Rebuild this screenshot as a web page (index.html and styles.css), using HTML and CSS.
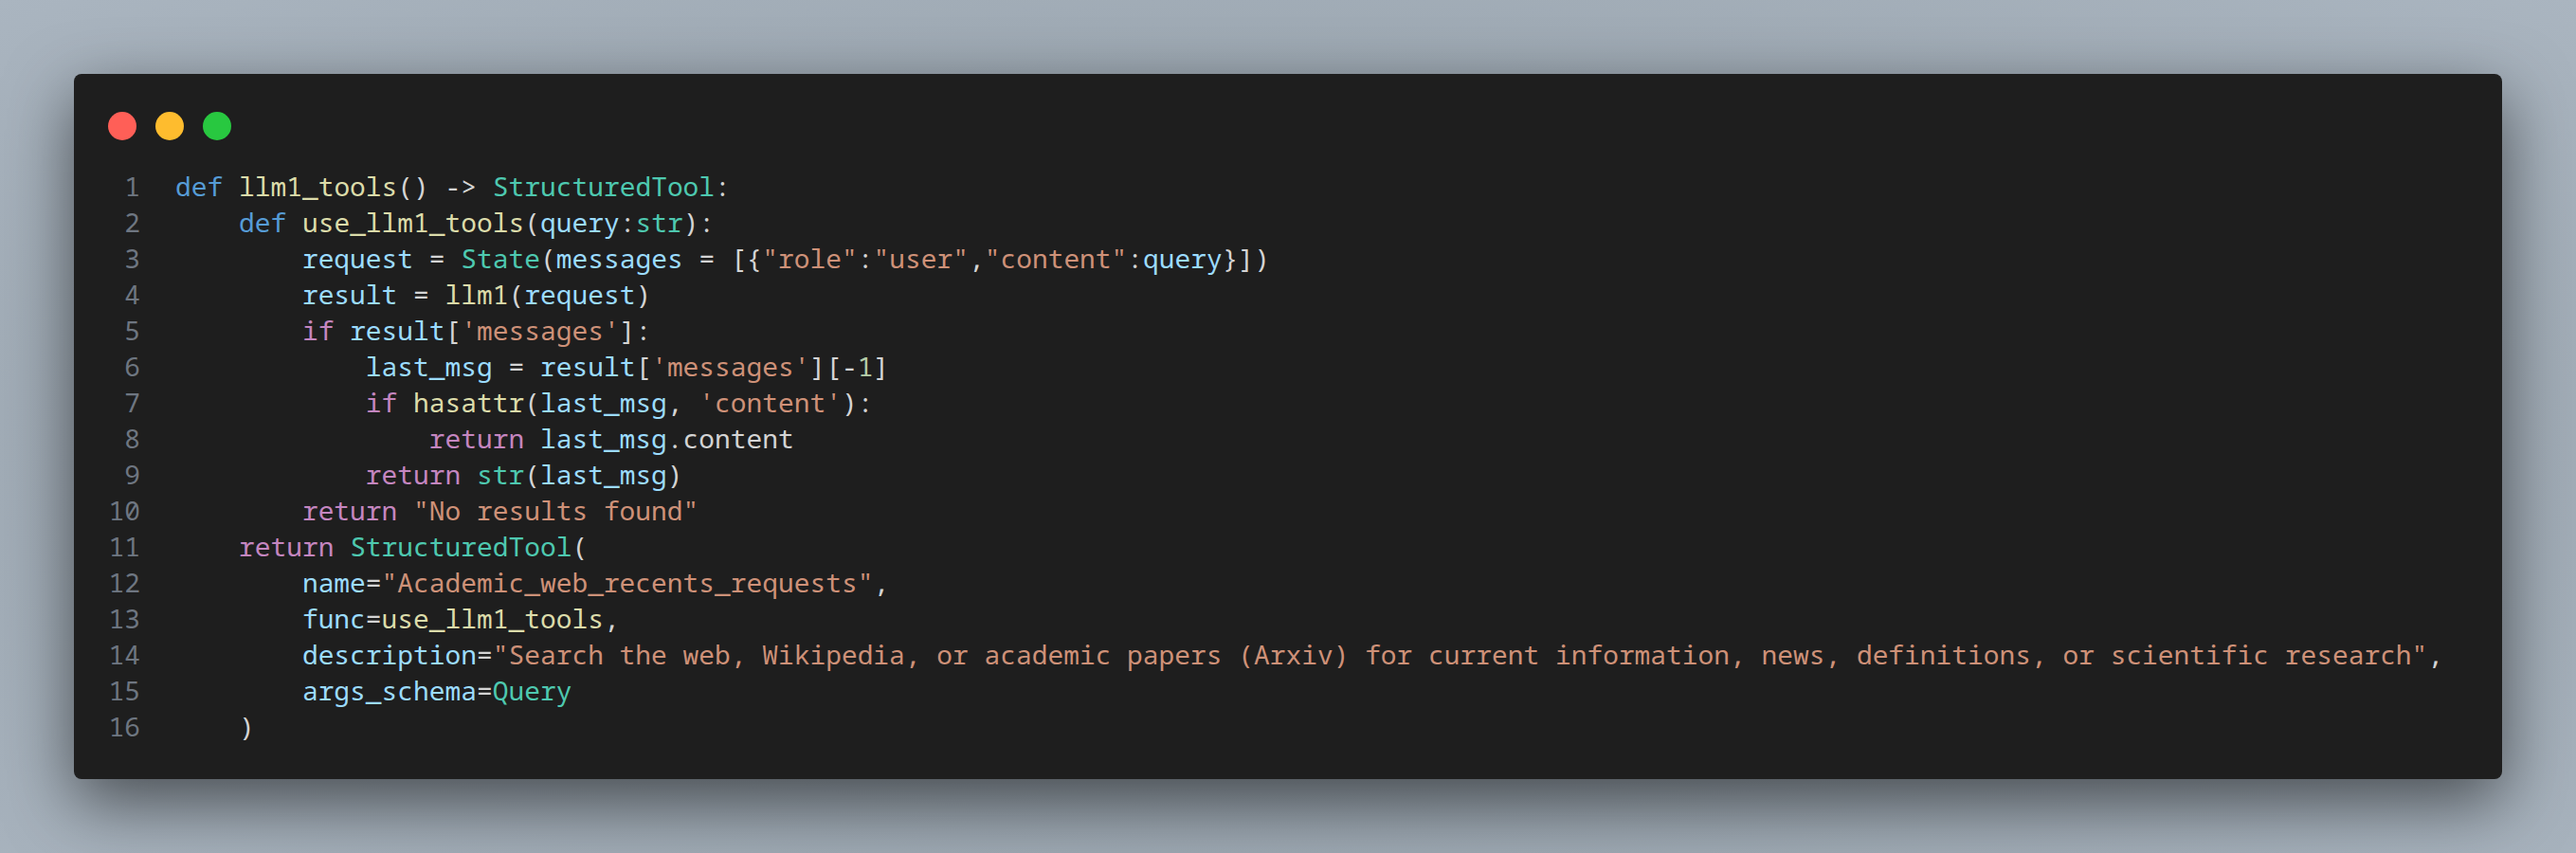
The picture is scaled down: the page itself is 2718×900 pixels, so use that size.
FILE: index.html
```html
<!DOCTYPE html>
<html lang="en">
<head>
<meta charset="utf-8">
<title>Code window</title>
<link rel="stylesheet" href="styles.css">
</head>
<body>
<div class="window">
  <div class="titlebar">
    <span class="dot red"></span>
    <span class="dot yellow"></span>
    <span class="dot green"></span>
  </div>
  <div class="code">
    <div class="ln">1</div><div class="line"><span class="kw">def</span> <span class="fn">llm1_tools</span><span class="p">()</span> <span class="p">-&gt;</span> <span class="cls">StructuredTool</span><span class="p">:</span></div>
    <div class="ln">2</div><div class="line">    <span class="kw">def</span> <span class="fn">use_llm1_tools</span><span class="p">(</span><span class="var">query</span><span class="p">:</span><span class="cls">str</span><span class="p">):</span></div>
    <div class="ln">3</div><div class="line">        <span class="var">request</span> <span class="p">=</span> <span class="cls">State</span><span class="p">(</span><span class="var">messages</span> <span class="p">=</span> <span class="p">[{</span><span class="str">"role"</span><span class="p">:</span><span class="str">"user"</span><span class="p">,</span><span class="str">"content"</span><span class="p">:</span><span class="var">query</span><span class="p">}])</span></div>
    <div class="ln">4</div><div class="line">        <span class="var">result</span> <span class="p">=</span> <span class="fn">llm1</span><span class="p">(</span><span class="var">request</span><span class="p">)</span></div>
    <div class="ln">5</div><div class="line">        <span class="ctl">if</span> <span class="var">result</span><span class="p">[</span><span class="str">'messages'</span><span class="p">]:</span></div>
    <div class="ln">6</div><div class="line">            <span class="var">last_msg</span> <span class="p">=</span> <span class="var">result</span><span class="p">[</span><span class="str">'messages'</span><span class="p">][-</span><span class="num">1</span><span class="p">]</span></div>
    <div class="ln">7</div><div class="line">            <span class="ctl">if</span> <span class="fn">hasattr</span><span class="p">(</span><span class="var">last_msg</span><span class="p">,</span> <span class="str">'content'</span><span class="p">):</span></div>
    <div class="ln">8</div><div class="line">                <span class="ctl">return</span> <span class="var">last_msg</span><span class="p">.content</span></div>
    <div class="ln">9</div><div class="line">            <span class="ctl">return</span> <span class="cls">str</span><span class="p">(</span><span class="var">last_msg</span><span class="p">)</span></div>
    <div class="ln">10</div><div class="line">        <span class="ctl">return</span> <span class="str">"No results found"</span></div>
    <div class="ln">11</div><div class="line">    <span class="ctl">return</span> <span class="cls">StructuredTool</span><span class="p">(</span></div>
    <div class="ln">12</div><div class="line">        <span class="var">name</span><span class="p">=</span><span class="str">"Academic_web_recents_requests"</span><span class="p">,</span></div>
    <div class="ln">13</div><div class="line">        <span class="var">func</span><span class="p">=</span><span class="fn">use_llm1_tools</span><span class="p">,</span></div>
    <div class="ln">14</div><div class="line">        <span class="var">description</span><span class="p">=</span><span class="str">"Search the web, Wikipedia, or academic papers (Arxiv) for current information, news, definitions, or scientific research"</span><span class="p">,</span></div>
    <div class="ln">15</div><div class="line">        <span class="var">args_schema</span><span class="p">=</span><span class="cls">Query</span></div>
    <div class="ln">16</div><div class="line">    <span class="p">)</span></div>
  </div>
</div>
</body>
</html>
```
FILE: styles.css
```css
html, body {
  margin: 0;
  padding: 0;
}
body {
  width: 2718px;
  height: 900px;
  box-sizing: border-box;
  padding: 78px;
  background: radial-gradient(ellipse at 50% 55%, #848f99 0%, #9ca7b1 55%, #aab5c0 100%);
  overflow: hidden;
}
.window {
  height: 744px;
  box-sizing: border-box;
  background: #1e1e1e;
  border-radius: 8px;
  padding: 40px 36px 35px 36px;
  box-shadow: 0 24px 70px rgba(0, 0, 0, 0.55);
}
.titlebar {
  display: flex;
  gap: 20px;
  height: 30px;
  margin-bottom: 29px;
}
.dot {
  width: 30px;
  height: 30px;
  border-radius: 50%;
  display: block;
}
.red { background: #ff5f57; }
.yellow { background: #febc2e; }
.green { background: #28c840; }
.code {
  display: grid;
  grid-template-columns: 34px 1fr;
  column-gap: 37px;
  font-family: "Noto Sans Mono", "DejaVu Sans Mono", monospace;
  font-size: 27.9px;
  line-height: 38px;
  color: #d4d4d4;
}
.ln {
  text-align: right;
  color: #6e7681;
}
.line {
  white-space: pre;
}
.kw { color: #569cd6; }
.fn { color: #dcdcaa; }
.cls { color: #4ec9b0; }
.var { color: #9cdcfe; }
.str { color: #ce9178; }
.ctl { color: #c586c0; }
.num { color: #b5cea8; }
.p { color: #d4d4d4; }
```
